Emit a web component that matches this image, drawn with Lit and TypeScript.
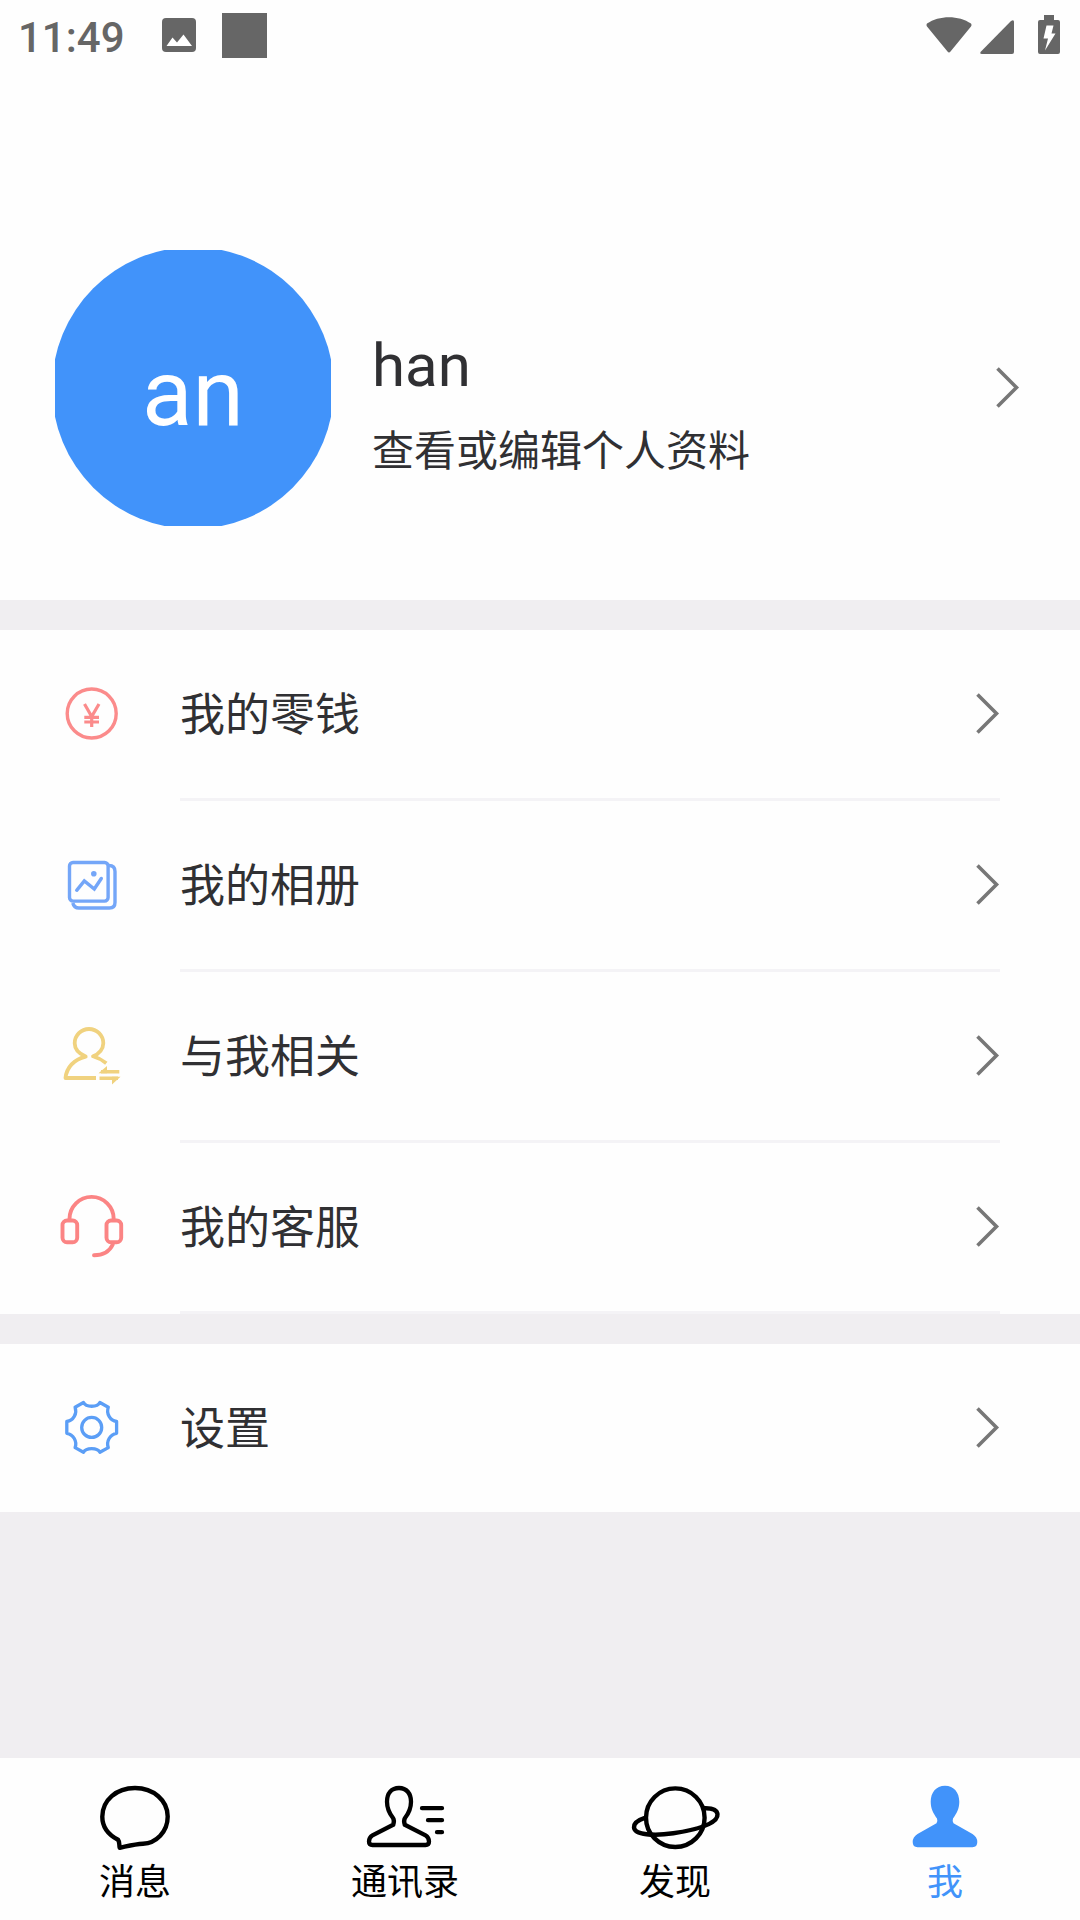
import { LitElement, html, css, svg, TemplateResult } from "lit";
import { customElement, property } from "lit/decorators.js";
import { classMap } from "lit/directives/class-map.js";

const rowIcons: Record<string, TemplateResult> = {
  wallet: svg`<g stroke="#fb8b8b" stroke-width="3.4">
    <circle cx="31.700" cy="31.500" r="24.500"/>
    <path d="M24.500 22 31.700 34.500 39 22M31.700 33.500V45M24.300 35.300H39M24.300 40H39" stroke-width="3.200"/></g>`,
  album: svg`<g stroke="#74a6f8" stroke-width="3.400" stroke-linejoin="round">
    <rect x="9.500" y="9.500" width="38.600" height="38.600" rx="3.500"/>
    <path d="M49 12.500C53 12.500 55 15 55 18.500V49.500Q55 55 49.500 55H19Q14 55 12.800 50"/>
    <path d="M16.700 37.300 24.300 28 34.300 36 41.300 25.500" stroke-linecap="round" stroke-linejoin="miter"/></g>
    <circle cx="33.800" cy="20.800" r="2.800" fill="#74a6f8"/>`,
  related: svg`<g stroke="#f0d27f" stroke-width="3.800" stroke-linejoin="round">
    <path d="M36 54H5.500C6.500 43.500 14 35.300 25.700 32.600C18.500 29.500 14.700 24.500 14.700 19.300A14.300 14.300 0 0 1 43.300 19.300C43.300 24.500 39.500 30 33 32.300Q40.500 34.500 46.300 39.200"/>
    <path d="M41 47.700H59.300M39.500 54.300H58" stroke-width="3.400"/></g>
    <path d="M38.500 49.300 47 42V49.300ZM60.500 52.700 52 60.500V52.700Z" fill="#f0d27f"/>`,
  service: svg`<g stroke="#fb8484" stroke-width="3.900" stroke-linecap="round">
    <path d="M9.500 24A22.100 22.100 0 0 1 53.700 24"/>
    <rect x="2.500" y="25.500" width="14.700" height="21.700" rx="4.500"/>
    <rect x="46.500" y="25.500" width="14.700" height="21.700" rx="4.500"/>
    <path d="M52.800 49.500C49.500 56.500 43 60.300 34 60.300"/></g>`,
  settings: svg`<g stroke="#5b9ef6" stroke-width="3.300" stroke-linejoin="round">
    <circle cx="31.700" cy="31.400" r="10"/>
    <path d="M23.500 6.500C26 11.500 37.400 11.500 39.900 6.500L48.300 11.200C46 17.500 50 24.500 56.600 25.500V37.300C50 38.300 46 45.300 48.300 51.600L39.900 56.300C37.400 51.300 26 51.300 23.500 56.300L15.100 51.600C17.400 45.300 13.400 38.300 6.800 37.300V25.500C13.400 24.500 17.400 17.500 15.100 11.200Z"/></g>`,
};

const tabIcons: Record<string, TemplateResult> = {
  chat: svg`<path d="M31 57.700C21 52.500 15.300 44.500 15.300 34.700C15.300 18 29.500 6 48 6S80.700 18.500 80.700 34.500C80.700 50 69 61 56 61.700C48 62 41 64 32.700 65.800C32 63 32.800 60 31 57.700Z" stroke="currentColor" stroke-width="4.400" stroke-linejoin="round"/>`,
  contacts: svg`<g stroke="currentColor" stroke-width="4.300" stroke-linecap="round">
    <path d="M42 6C34.500 6 30 11.500 30 19.700C30 27 32.500 31.500 36 36Q37.600 38.500 36.300 42.700L15.500 53.300Q12 55.500 12 59.500Q12 63 15.500 63H68.500Q72 63 72 59.500Q72 55.500 68.500 53.300L47.700 42.700Q46.400 38.500 48 36C51.500 31.500 54 27 54 19.700C54 11.500 49.500 6 42 6Z"/>
    <path d="M65 26.200H85M71 38.200H85M80 50.200H85"/></g>`,
  discover: svg`<g stroke="currentColor" stroke-width="4.400">
    <circle cx="48.300" cy="35.700" r="29.300"/>
    <path d="M18.500 35.700C11.500 38 6.800 41.500 7 45.300C7.500 53 27 54 46.300 51.300C68 48 91.500 42 90.500 32.300C90 28 84.500 26 77 26.300"/></g>`,
  me: svg`<path d="M48 3.700C39 3.700 33.700 10.500 33.700 19.700C33.700 27 36.500 31.500 40 36.500Q41 39.500 39.500 41.300L20.500 52Q15.700 55 15.700 60Q15.700 65.200 20.500 65.200H75.500Q80.300 65.200 80.300 60Q80.300 55 75.500 52L56.500 41.300Q55 39.500 56 36.500C59.500 31.500 62.300 27 62.300 19.700C62.300 10.500 57 3.700 48 3.700Z" fill="currentColor"/>`,
};

const chevron = html`<svg class="chevron" viewBox="0 0 24 42" fill="none" aria-hidden="true">
  <path d="M1.500 1.500 20.500 20.500 1.500 39.500" stroke="#777" stroke-width="3.600"/>
</svg>`;

const base = css`
  * { box-sizing: border-box; }
  button {
    font: inherit;
    color: inherit;
    background: none;
    border: 0;
    margin: 0;
    padding: 0;
    text-align: left;
    cursor: pointer;
  }
  svg { display: block; flex: none; }
  .chevron { width: 24px; height: 42px; }
`;

@customElement("status-bar")
export class StatusBar extends LitElement {
  static styles = [base, css`
    :host {
      display: flex;
      align-items: center;
      justify-content: space-between;
      height: 72px;
      padding: 0 20px 2px 18px;
      color: #666;
    }
    .side { display: flex; align-items: center; }
    .time { font-size: 42px; line-height: 48px; font-weight: 500; padding-top: 6px; }
    .photo { width: 34px; height: 34px; margin-left: 37px; }
    .block { width: 45px; height: 45px; margin-left: 26px; background: #666; }
    .wifi { width: 46px; height: 36px; }
    .signal { width: 34px; height: 34px; margin: 4px 24px 0 8px; }
    .battery { width: 22px; height: 39px; margin-bottom: 2px; }
  `];

  render() {
    return html`
      <div class="side">
        <span class="time">11:49</span>
        <svg class="photo" viewBox="0 0 34 34" aria-hidden="true">
          <rect width="34" height="34" rx="4" fill="#666"/>
          <path d="M4.500 28 10.500 19.500 15 24.500 21.500 16.500 30 28Z" fill="#fff"/>
        </svg>
        <span class="block"></span>
      </div>
      <div class="side">
        <svg class="wifi" viewBox="0 0 46 36" aria-hidden="true">
          <path d="M1 6.500C13-2 33-2 45 6.500Q46 8 45 9.500L24.500 34.500Q23 36.500 21.500 34.500L1 9.500Q0 8 1 6.500Z" fill="#666"/>
        </svg>
        <svg class="signal" viewBox="0 0 34 34" aria-hidden="true">
          <path d="M31 1Q34-1 34 2V32Q34 34 32 34H2Q-1 34 1 31.500Z" fill="#666"/>
        </svg>
        <svg class="battery" viewBox="0 0 22 39" aria-hidden="true">
          <path d="M6 0H16V5H20Q22 5 22 7V37Q22 39 20 39H2Q0 39 0 37V7Q0 5 2 5H6Z" fill="#666"/>
          <path d="M8.500 10.500H15.500L13.500 18.500H17.500L7 35.500 10 23.500H5.500Z" fill="#fff"/>
        </svg>
      </div>`;
  }
}

@customElement("profile-card")
export class ProfileCard extends LitElement {
  static styles = [base, css`
    :host { display: block; }
    .card {
      display: flex;
      align-items: center;
      width: 100%;
      padding: 178px 60px 74px 55px;
    }
    .avatar {
      flex: none;
      display: grid;
      place-items: center;
      width: 276px;
      height: 276px;
      padding-top: 12px;
      background: #4193fa;
      clip-path: circle(141px);
      color: #fff;
      font-size: 93px;
      line-height: 106px;
    }
    .info {
      flex: 1;
      display: flex;
      flex-direction: column;
      gap: 20px;
      padding: 38px 0 0 41px;
      color: #303033;
    }
    .name { font-size: 60px; line-height: 70px; }
    .hint { font-size: 42px; line-height: 62px; }
  `];

  render() {
    return html`<button class="card">
      <span class="avatar">an</span>
      <span class="info">
        <span class="name">han</span>
        <span class="hint">查看或编辑个人资料</span>
      </span>
      ${chevron}
    </button>`;
  }
}

@customElement("menu-row")
export class MenuRow extends LitElement {
  @property() icon = "";
  @property() label = "";
  @property({ type: Boolean }) divided = false;

  static styles = [base, css`
    :host { display: block; }
    .row {
      display: flex;
      align-items: center;
      width: 100%;
      height: 168px;
      padding: 0 80px 0 60px;
    }
    .icon { width: 64px; height: 64px; overflow: visible; }
    .label {
      flex: 1;
      padding: 4px 0 0 56px;
      font-size: 45px;
      line-height: 66px;
      color: #303033;
    }
    .line { height: 3px; margin: 0 80px 0 180px; background: #f4f3f6; }
  `];

  render() {
    return html`
      <button class="row">
        <svg class="icon" viewBox="0 0 64 64" fill="none" aria-hidden="true">${rowIcons[this.icon]}</svg>
        <span class="label">${this.label}</span>
        ${chevron}
      </button>
      ${this.divided ? html`<div class="line"></div>` : null}`;
  }
}

@customElement("tab-bar")
export class TabBar extends LitElement {
  static styles = [base, css`
    :host { display: block; background: #fefefe; }
    .tabs { display: grid; grid-template-columns: repeat(4, 1fr); }
    .tab {
      display: flex;
      flex-direction: column;
      align-items: center;
      gap: 2px;
      padding: 24px 0 10px;
      color: #000;
      font-size: 36px;
      line-height: 54px;
    }
    .active { color: #4193fa; }
    .icon { width: 96px; height: 72px; }
  `];

  private tabs = [
    { icon: "chat", label: "消息" },
    { icon: "contacts", label: "通讯录" },
    { icon: "discover", label: "发现" },
    { icon: "me", label: "我" },
  ];

  render() {
    return html`<nav class="tabs">
      ${this.tabs.map((t) => html`
        <button class=${classMap({ tab: true, active: t.icon === "me" })}>
          <svg class="icon" viewBox="0 0 96 72" fill="none" aria-hidden="true">${tabIcons[t.icon]}</svg>
          <span>${t.label}</span>
        </button>`)}
    </nav>`;
  }
}

@customElement("app-root")
export class AppRoot extends LitElement {
  static styles = [base, css`
    :host {
      display: flex;
      flex-direction: column;
      min-height: 100vh;
      background: #f0eef1;
      font-family: Roboto, "Noto Sans CJK SC", sans-serif;
    }
    .content { flex: 1; display: flex; flex-direction: column; gap: 30px; }
    .panel { background: #fefefe; }
  `];

  private items = [
    { icon: "wallet", label: "我的零钱" },
    { icon: "album", label: "我的相册" },
    { icon: "related", label: "与我相关" },
    { icon: "service", label: "我的客服" },
  ];

  render() {
    return html`
      <main class="content" lang="zh-CN">
        <section class="panel">
          <status-bar></status-bar>
          <profile-card></profile-card>
        </section>
        <section class="panel">
          ${this.items.map((i) => html`<menu-row icon=${i.icon} label=${i.label} divided></menu-row>`)}
        </section>
        <section class="panel">
          <menu-row icon="settings" label="设置"></menu-row>
        </section>
      </main>
      <tab-bar lang="zh-CN"></tab-bar>`;
  }
}
